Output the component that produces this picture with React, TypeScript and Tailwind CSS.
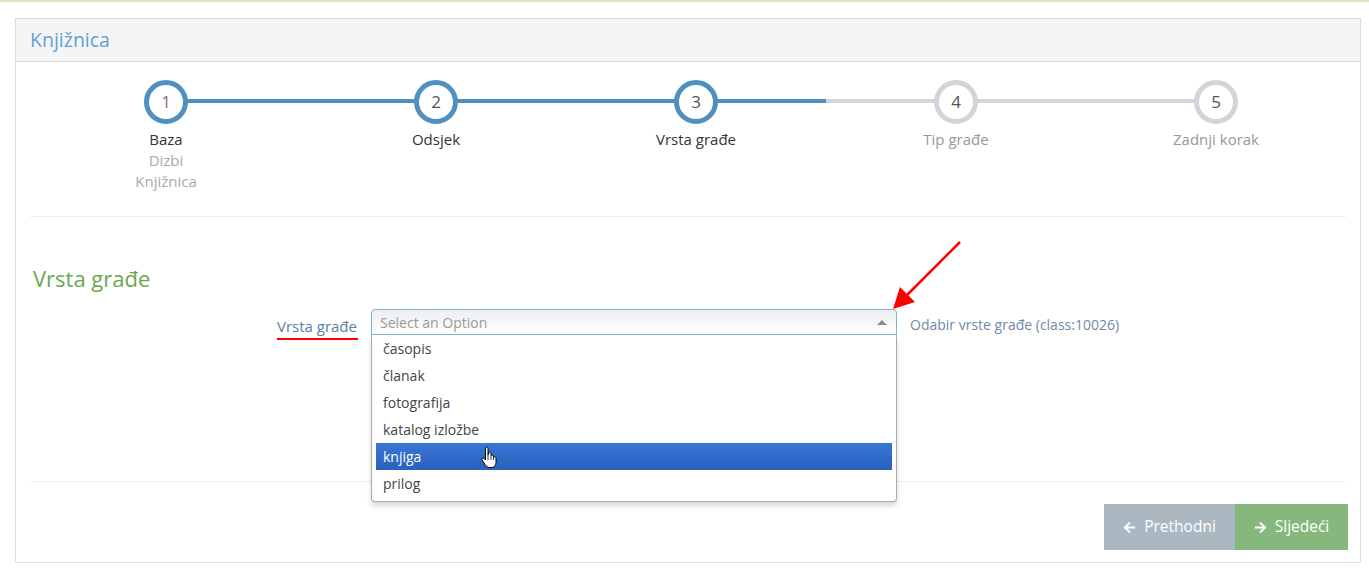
import { FaArrowLeft, FaArrowRight } from 'react-icons/fa';

type Step = {
  n: number;
  title: string;
  sub?: string[];
  done: boolean;
  leftBlue: boolean;
  rightBlue: boolean;
  first?: boolean;
  last?: boolean;
};

const steps: Step[] = [
  { n: 1, title: 'Baza', sub: ['Dizbi', 'Knjižnica'], done: true, leftBlue: true, rightBlue: true, first: true },
  { n: 2, title: 'Odsjek', done: true, leftBlue: true, rightBlue: true },
  { n: 3, title: 'Vrsta građe', done: true, leftBlue: true, rightBlue: true },
  { n: 4, title: 'Tip građe', done: false, leftBlue: false, rightBlue: false },
  { n: 5, title: 'Zadnji korak', done: false, leftBlue: false, rightBlue: false, last: true },
];

const options = ['časopis', 'članak', 'fotografija', 'katalog izložbe', 'knjiga', 'prilog'];

function WizardStep({ step }: { step: Step }) {
  return (
    <div className={`flex flex-col items-center ${step.first ? 'w-[280px]' : 'w-[260px]'}`}>
      <div className="relative w-full h-[44px] flex justify-center">
        {!step.first && (
          <div
            className={`absolute top-[19px] left-0 right-1/2 h-[4px] ${step.leftBlue ? 'bg-[#5090c1]' : 'bg-[#d1d4d8]'}`}
          />
        )}
        {!step.last && (
          <div
            className={`absolute top-[19px] left-1/2 right-0 h-[4px] ${step.rightBlue ? 'bg-[#5090c1]' : 'bg-[#d1d4d8]'}`}
          />
        )}
        <div
          className={`relative w-[44px] h-[44px] rounded-full bg-white border-[5px] flex items-center justify-center text-[17px] ${
            step.done ? 'border-[#5090c1]' : 'border-[#d1d4d8]'
          } ${step.n === 1 ? 'text-[#8f6f6f]' : 'text-[#555]'}`}
        >
          {step.n}
        </div>
      </div>
      <div className={`mt-[5px] text-[15px] leading-[21px] ${step.done ? 'text-[#333]' : 'text-[#999]'}`}>
        {step.title}
      </div>
      {step.sub?.map((s) => (
        <div key={s} className="text-[15px] leading-[21px] text-[#aaa]">
          {s}
        </div>
      ))}
    </div>
  );
}

export default function App() {
  return (
    <div className="relative w-full h-[578px] bg-white overflow-hidden font-['Open_Sans',sans-serif]">
      <div className="h-[2px] bg-[#d4e8c8]" />

      <div className="ml-[15px] mr-[8px] mt-[16px] border border-[#dddddd]">
        <div className="h-[43px] bg-[#f5f5f5] border-b border-[#dddddd] px-[14px] flex items-center text-[19.5px] text-[#62a0d6]">
          Knjižnica
        </div>

        <div className="px-[14px] pt-[18px] pb-[12px]">
          <div className="flex -ml-[4px]">
            {steps.map((s) => (
              <WizardStep key={s.n} step={s} />
            ))}
          </div>

          <div className="mt-[24px] h-px bg-[#eeeeee]" />

          <h3 className="mt-[47px] pl-[3px] text-[22px] leading-[28px] text-[#6aa84f]">Vrsta građe</h3>

          <div className="mt-[17px] flex items-start">
            <div className="w-[327px] flex justify-end">
              <span className="relative pt-[7px] text-[15px] leading-[20px] text-[#5c7ea5]">
                Vrsta građe
                <span className="absolute left-0 -right-[1px] -bottom-[4px] h-[2px] bg-[#ff0000]" />
              </span>
            </div>

            <div className="relative ml-[14px] w-[526px] z-10">
              <div className="h-[26px] border border-[#7fb2cf] rounded-t-[4px] bg-gradient-to-b from-[#eeeeee] to-white flex items-center justify-between pl-[8px] pr-[9px] text-[14px] text-[#999]">
                <span>Select an Option</span>
                <span className="w-0 h-0 border-l-[5px] border-r-[5px] border-b-[5px] border-l-transparent border-r-transparent border-b-[#888]" />
              </div>
              <div className="absolute left-0 right-0 top-[26px] bg-white border border-t-0 border-[#aaaaaa] rounded-b-[4px] shadow-[0_4px_5px_rgba(0,0,0,0.15)] px-[4px] pb-[4px]">
                {options.map((o) => (
                  <div
                    key={o}
                    className={`h-[27px] flex items-center px-[7px] text-[14px] ${
                      o === 'knjiga'
                        ? 'bg-gradient-to-b from-[#3875d7] to-[#2a62bc] text-white'
                        : 'text-[#444]'
                    }`}
                  >
                    {o}
                  </div>
                ))}
              </div>
            </div>

            <span className="ml-[13px] pt-[6px] text-[14px] leading-[20px] text-[#7089a6]">
              Odabir vrste građe (class:10026)
            </span>
          </div>

          <div className="mt-[145px] h-px bg-[#eeeeee]" />

          <div className="mt-[22px] flex justify-end -mr-[2px]">
            <button className="w-[131px] h-[46px] bg-[#abb8c2] text-white text-[15.5px] flex items-center justify-center gap-[8px]">
              <FaArrowLeft className="w-[13px] h-[13px]" />
              <span>Prethodni</span>
            </button>
            <button className="w-[113px] h-[46px] bg-[#86b87e] text-white text-[15.5px] flex items-center justify-center gap-[8px]">
              <FaArrowRight className="w-[13px] h-[13px]" />
              <span>Sljedeći</span>
            </button>
          </div>
        </div>
      </div>

      <svg className="absolute left-0 top-0 pointer-events-none z-20" width="1369" height="578">
        <line x1="960" y1="242" x2="906" y2="296" stroke="#ff0000" strokeWidth="2.5" />
        <polygon points="893,309 900,287 915,302" fill="#ff0000" />
      </svg>

      <svg className="absolute left-[480px] top-[446px] pointer-events-none z-20" width="20" height="24" viewBox="0 0 20 24">
        <path
          d="M5.5 1.5 C6.5 0.5 8 1 8 2.5 L8 9 L8.5 6.8 C9.5 6 11 6.3 11 7.5 L11 9.5 C12 8.7 13.5 9 13.5 10.2 L13.5 11 C14.5 10.3 16 10.7 16 12 L16 16.5 C16 19 14.5 21 12.5 21.5 L8.5 21.5 C7 21 6 20 5 18.5 L2 14 C1.3 12.8 2.5 11.5 3.8 12.3 L5.5 14 Z"
          fill="#ffffff"
          stroke="#000000"
          strokeWidth="1"
          strokeLinejoin="round"
        />
        <path d="M8 9 L8 14 M11 9.5 L11 14 M13.5 11 L13.5 14" stroke="#000" strokeWidth="0.8" />
      </svg>
    </div>
  );
}
